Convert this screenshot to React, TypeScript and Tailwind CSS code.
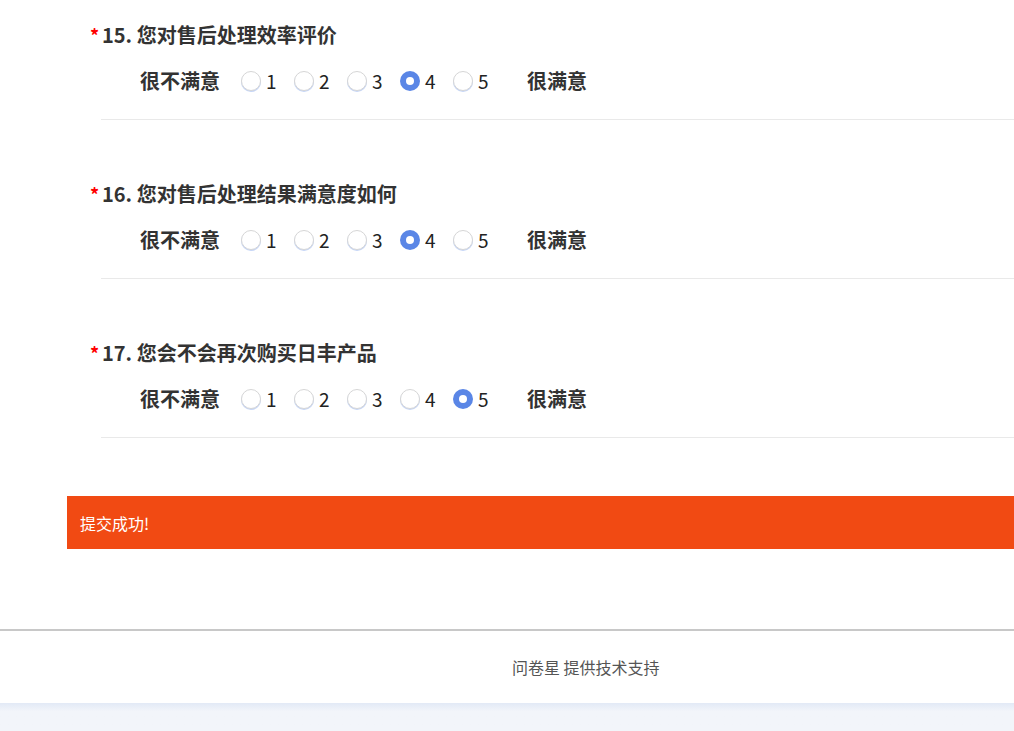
import React from 'react';

const FONT = { fontFamily: '"Microsoft YaHei", "Noto Sans CJK SC", "Noto Sans", sans-serif' };

type Question = { no: number; title: string; value: number };

const QUESTIONS: Question[] = [
  { no: 15, title: '您对售后处理效率评价', value: 4 },
  { no: 16, title: '您对售后处理结果满意度如何', value: 4 },
  { no: 17, title: '您会不会再次购买日丰产品', value: 5 },
];

function Radio({ checked }: { checked: boolean }) {
  if (checked) {
    return (
      <span className="flex h-[20px] w-[20px] shrink-0 items-center justify-center rounded-full bg-[#5a86e6]">
        <span className="h-[8px] w-[8px] rounded-full bg-white" />
      </span>
    );
  }
  return (
    <span className="h-[20px] w-[20px] shrink-0 rounded-full border border-[#d6d6d6] bg-white shadow-[0_1px_0_rgba(90,134,230,0.35)]" />
  );
}

function QuestionBlock({ q, first }: { q: Question; first: boolean }) {
  return (
    <div className={first ? '' : 'mt-[62px]'}>
      <div className="flex h-[24px] items-center text-[20px] font-bold leading-[24px] text-[#333]">
        <span className="ml-[23px] w-[12px] text-[18px] text-[#ff0000]">*</span>
        <span>{q.no}.&nbsp;{q.title}</span>
      </div>
      <div className="mt-[19px] flex h-[30px] items-center pl-[73px]">
        <span className="text-[20px] font-bold text-[#333]">很不满意</span>
        <div className="ml-[21px] flex items-center">
          {[1, 2, 3, 4, 5].map((n) => (
            <label key={n} className="flex w-[53px] items-center">
              <Radio checked={q.value === n} />
              <span className="ml-[5px] text-[19px] text-[#222]">{n}</span>
            </label>
          ))}
        </div>
        <span className="ml-[21px] text-[20px] font-bold text-[#333]">很满意</span>
      </div>
      <div className="ml-[34px] mt-[23px] h-px bg-[#e9e9e9]" />
    </div>
  );
}

export default function App() {
  return (
    <div className="min-h-[731px] bg-white" style={FONT}>
      <div className="pl-[67px] pt-[23px]">
        {QUESTIONS.map((q, i) => (
          <QuestionBlock key={q.no} q={q} first={i === 0} />
        ))}
        <div className="mt-[58px] flex h-[53px] items-center bg-[#f14a13] pl-[13px] text-[16px] text-white">
          提交成功!
        </div>
      </div>
      <div className="mt-[80px] h-[2px] bg-[#c8c8c8]" />
      <div className="flex h-[72px] items-center pl-[512px] text-[16px] text-[#555]">
        问卷星 提供技术支持
      </div>
      <div className="h-[28px] bg-gradient-to-b from-[#e2e9f6] to-[#f2f5fa] to-[30%]" />
    </div>
  );
}
